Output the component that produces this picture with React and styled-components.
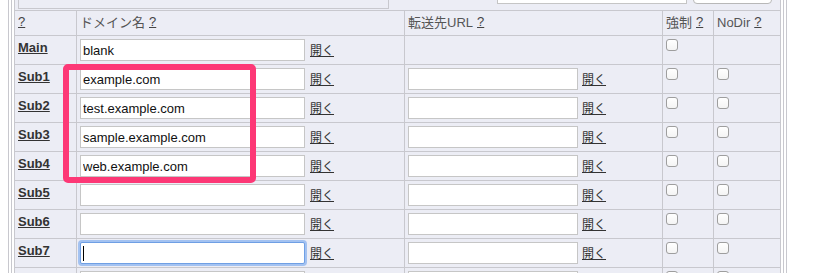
import React from "react";
import styled, { createGlobalStyle } from "styled-components";

const GlobalStyle = createGlobalStyle`
  html, body {
    margin: 0;
    padding: 0;
    background: #fff;
  }
  body {
    font-family: "Liberation Sans", "Noto Sans CJK JP", sans-serif;
    font-size: 13px;
    color: #333;
    overflow: hidden;
  }
`;

const line = "#c8c8ce";

const Page = styled.div`
  position: relative;
  padding-left: 8px;
  margin-top: -29px;
`;

const Frame = styled.div`
  width: 779px;
  box-sizing: border-box;
  border-left: 4px double ${line};
  border-right: 4px double ${line};
  padding: 0 2px;
`;

const Sheet = styled.div`
  border-left: 1px solid ${line};
  background: #ecedf5;
`;

const Row = styled.div`
  display: grid;
  grid-template-columns: 62px 328px 258px 51px 67px;
`;

const Cell = styled.div`
  box-sizing: border-box;
  height: ${(p) => p.$h || 29}px;
  padding: 3px;
  border-right: 1px solid ${line};
  border-bottom: 1px solid ${line};
  white-space: nowrap;
  display: flex;
  align-items: ${(p) => (p.$mid ? "center" : "flex-start")};
  align-self: start;
`;

const FieldCell = styled(Cell)`
  align-items: flex-start;
`;

const TopCell = styled.div`
  grid-column: 1 / -1;
  box-sizing: border-box;
  height: 40px;
  padding: 0 3px 1px 3px;
  border-right: 1px solid ${line};
  border-bottom: 1px solid ${line};
  display: flex;
  align-items: flex-end;
`;

const MemoBox = styled.div`
  box-sizing: border-box;
  width: 371px;
  height: 50px;
  border: 1px solid ${line};
  border-top: none;
`;

const SearchInput = styled.input`
  box-sizing: border-box;
  width: 190px;
  height: 22px;
  margin: 0 0 5px 108px;
  border: 1px solid #c5c5c5;
  background: #fff;
`;

const SearchButton = styled.button`
  box-sizing: border-box;
  width: 79px;
  height: 22px;
  margin: 0 0 5px 6px;
  border: 1px solid #b8b8b8;
  border-radius: 4px;
  background: #fff;
`;

const HeadText = styled.span`
  color: #555;
  font-size: 13px;
  line-height: 18px;
`;

const Help = styled.a`
  color: #444;
  text-decoration: underline;
  margin-left: ${(p) => (p.$alone ? 0 : 4)}px;
`;

const Label = styled.a`
  color: #333;
  font-weight: bold;
  font-size: 13px;
  line-height: 16px;
  text-decoration: underline;
  padding-top: 1px;
`;

const TextInput = styled.input`
  box-sizing: border-box;
  width: ${(p) => p.$w}px;
  height: 22px;
  margin: 0;
  padding: 1px 2px 0;
  border: 1px solid ${(p) => (p.$focus ? "#6f9fe4" : "#c6c6c6")};
  box-shadow: ${(p) =>
    p.$focus ? "0 0 0 2px rgba(125, 170, 238, 0.65)" : "none"};
  border-radius: ${(p) => (p.$focus ? 2 : 0)}px;
  background: #fff;
  font-family: "Liberation Sans", "Noto Sans CJK JP", sans-serif;
  font-size: 13px;
  color: #111;
  outline: none;
`;

const Caret = styled.span`
  position: relative;
  display: inline-block;
  &::after {
    content: "";
    position: absolute;
    left: 3px;
    top: 4px;
    width: 1px;
    height: 15px;
    background: #000;
  }
`;

const OpenLink = styled.a`
  margin-left: ${(p) => p.$gap}px;
  margin-top: 4px;
  color: #333;
  font-size: 12px;
  line-height: 16px;
  text-decoration: underline;
`;

const Check = styled.input.attrs({ type: "checkbox" })`
  appearance: none;
  -webkit-appearance: none;
  box-sizing: border-box;
  width: 12px;
  height: 12px;
  margin: 0;
  border: 1px solid #9e9e9e;
  border-radius: 3px;
  background: linear-gradient(#fff, #f4f4f4);
`;

const Highlight = styled.div`
  position: absolute;
  left: 63px;
  top: 93px;
  width: 193px;
  height: 119px;
  box-sizing: border-box;
  border: 6px solid #fd3876;
  border-radius: 5px;
  pointer-events: none;
`;

const rows = [
  { name: "Main", domain: "blank", main: true },
  { name: "Sub1", domain: "example.com" },
  { name: "Sub2", domain: "test.example.com" },
  { name: "Sub3", domain: "sample.example.com" },
  { name: "Sub4", domain: "web.example.com" },
  { name: "Sub5", domain: "" },
  { name: "Sub6", domain: "" },
  { name: "Sub7", domain: "", focus: true },
  { name: "Sub8", domain: "" },
];

const DomainRow = ({ item }) => (
  <Row>
    <Cell>
      <Label href="#">{item.name}</Label>
    </Cell>
    <FieldCell>
      {item.focus ? (
        <Caret>
          <TextInput $w={225} $focus defaultValue="" />
        </Caret>
      ) : (
        <TextInput $w={225} defaultValue={item.domain} />
      )}
      <OpenLink href="#" $gap={5}>開く</OpenLink>
    </FieldCell>
    <FieldCell>
      {!item.main && (
        <>
          <TextInput $w={170} defaultValue="" />
          <OpenLink href="#" $gap={4}>開く</OpenLink>
        </>
      )}
    </FieldCell>
    <Cell>
      <Check />
    </Cell>
    <Cell>{!item.main && <Check />}</Cell>
  </Row>
);

export default function App() {
  return (
    <>
      <GlobalStyle />
      <Page>
        <Frame>
          <Sheet>
            <Row>
              <TopCell>
                <MemoBox />
                <SearchInput />
                <SearchButton />
              </TopCell>
            </Row>
            <Row>
              <Cell $h={25}>
                <Help href="#" $alone>?</Help>
              </Cell>
              <Cell $h={25}>
                <HeadText>ドメイン名</HeadText>
                <Help href="#">?</Help>
              </Cell>
              <Cell $h={25}>
                <HeadText>転送先URL</HeadText>
                <Help href="#">?</Help>
              </Cell>
              <Cell $h={25}>
                <HeadText>強制</HeadText>
                <Help href="#">?</Help>
              </Cell>
              <Cell $h={25}>
                <HeadText>NoDir</HeadText>
                <Help href="#">?</Help>
              </Cell>
            </Row>
            {rows.map((item) => (
              <DomainRow key={item.name} item={item} />
            ))}
          </Sheet>
        </Frame>
        <Highlight />
      </Page>
    </>
  );
}
